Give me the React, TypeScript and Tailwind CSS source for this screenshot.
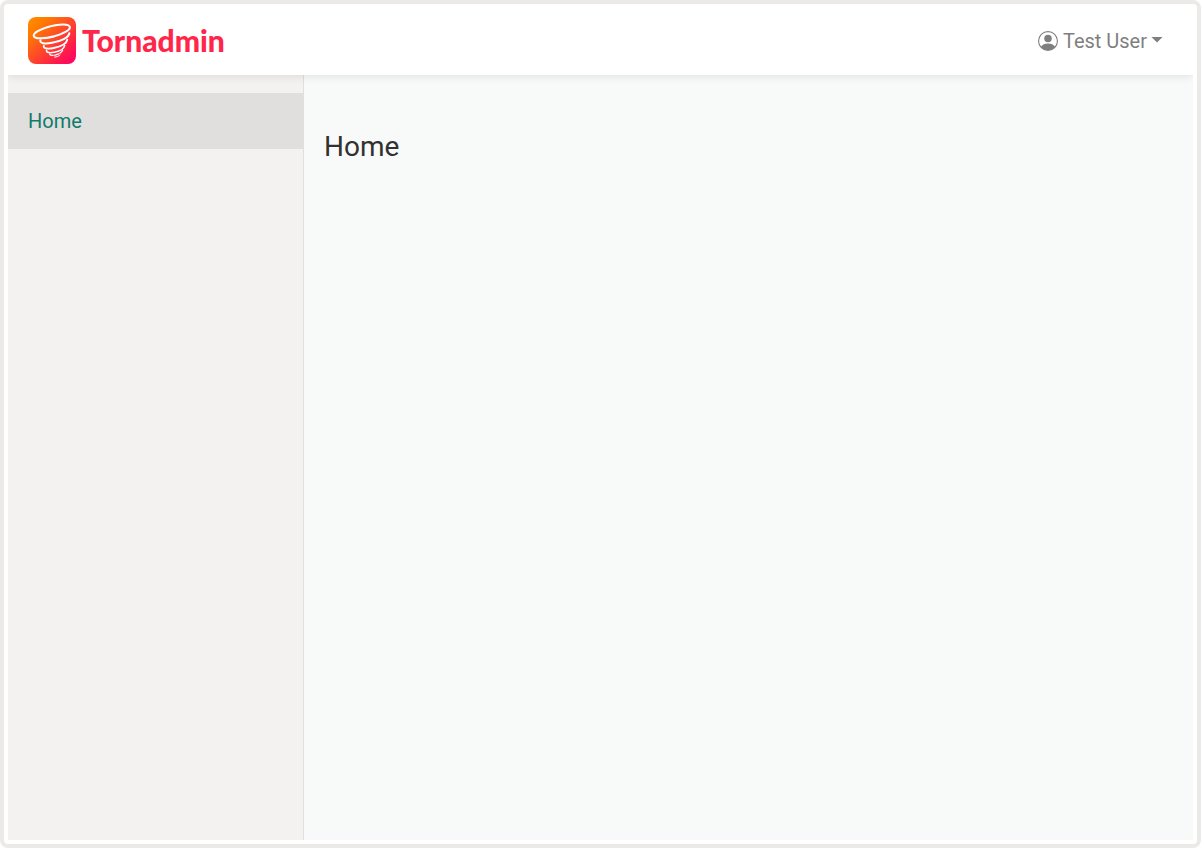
import { BsPersonCircle } from "react-icons/bs";

function Logo() {
  return (
    <svg viewBox="0 0 48 47" className="h-[47px] w-12" aria-hidden="true">
      <defs>
        <linearGradient id="logo-fill" x1="0" y1="0" x2="1" y2="1">
          <stop offset="0" stopColor="#ff8f00" />
          <stop offset="0.2" stopColor="#ff7c00" />
          <stop offset="0.8" stopColor="#ff1650" />
          <stop offset="1" stopColor="#ff0068" />
        </linearGradient>
      </defs>
      <rect width="48" height="47" rx="8" fill="url(#logo-fill)" />
      <g fill="none" stroke="#fff" strokeLinecap="round" strokeLinejoin="round">
        <ellipse cx="23.8" cy="14.4" rx="18.6" ry="5.4" transform="rotate(-14 23.8 14.4)" strokeWidth="2.1" />
        <path
          d="M12.4 23.2C11.6 26.4 16.6 27.2 24 25.8C33 24.2 40.6 20.6 41.3 16.4"
          strokeWidth="2.1"
        />
        <path
          d="M15.8 29C15.2 31.8 20 32.2 25.6 31C32.4 29.6 38.6 26.6 39.2 22.8"
          strokeWidth="1.9"
        />
        <path
          d="M18.6 33.6C18.2 35.8 22 36.1 26.4 35.2C31.6 34.2 36 31.8 36.6 28.6"
          strokeWidth="1.6"
        />
        <path d="M21.6 37.2C22.6 38.8 25.2 38.6 28 37.8C31.2 37 34 35.2 34.6 33.2" strokeWidth="1.3" strokeDasharray="4 1.4" />
        <path d="M26.6 40.1C28.6 40.1 31 39.2 32 38" strokeWidth="1" />
      </g>
    </svg>
  );
}

function Header() {
  return (
    <header className="z-10 flex h-[67px] shrink-0 items-center justify-between bg-white pr-[30px] pb-0.5 pl-5 shadow-[0_2px_8px_rgba(0,0,0,0.09)]">
      <a href="#home" className="flex items-start gap-1.5">
        <Logo />
        <span className="pt-[5px] font-[Lato,sans-serif] text-[30px] leading-9 font-black text-[#ff2649]">
          Tornadmin
        </span>
      </a>
      <button type="button" className="flex items-center text-xl leading-[30px] text-[#7f7f7f]">
        <BsPersonCircle className="mr-[5px] size-5" aria-hidden="true" />
        <span>Test User</span>
        <svg viewBox="0 0 12 6" className="mb-0.5 ml-1 h-1.5 w-3" aria-hidden="true">
          <path d="M0.5 0H11.5L6 5.5Z" fill="currentColor" />
        </svg>
      </button>
    </header>
  );
}

export default function App() {
  return (
    <div className="h-screen bg-white font-[Roboto,sans-serif]">
      <div className="flex h-full flex-col rounded-lg border-4 border-[#ebeae9] p-1">
        <div className="flex min-h-0 flex-1 flex-col overflow-hidden">
          <Header />
          <div className="flex min-h-0 flex-1">
            <nav className="w-74 shrink-0 border-r border-[#e1dfdd] bg-[#f3f2f1] pt-[18px]">
              <a href="#home" className="block bg-[#e1dfdd] px-5 py-[13px] text-xl leading-[30px] text-[#0f7b6c]">
                Home
              </a>
            </nav>
            <main className="flex-1 bg-[#f8faf9] px-5 pt-[55px]">
              <h1 className="text-[28px] leading-[34px] text-[#323130]">Home</h1>
            </main>
          </div>
        </div>
      </div>
    </div>
  );
}
